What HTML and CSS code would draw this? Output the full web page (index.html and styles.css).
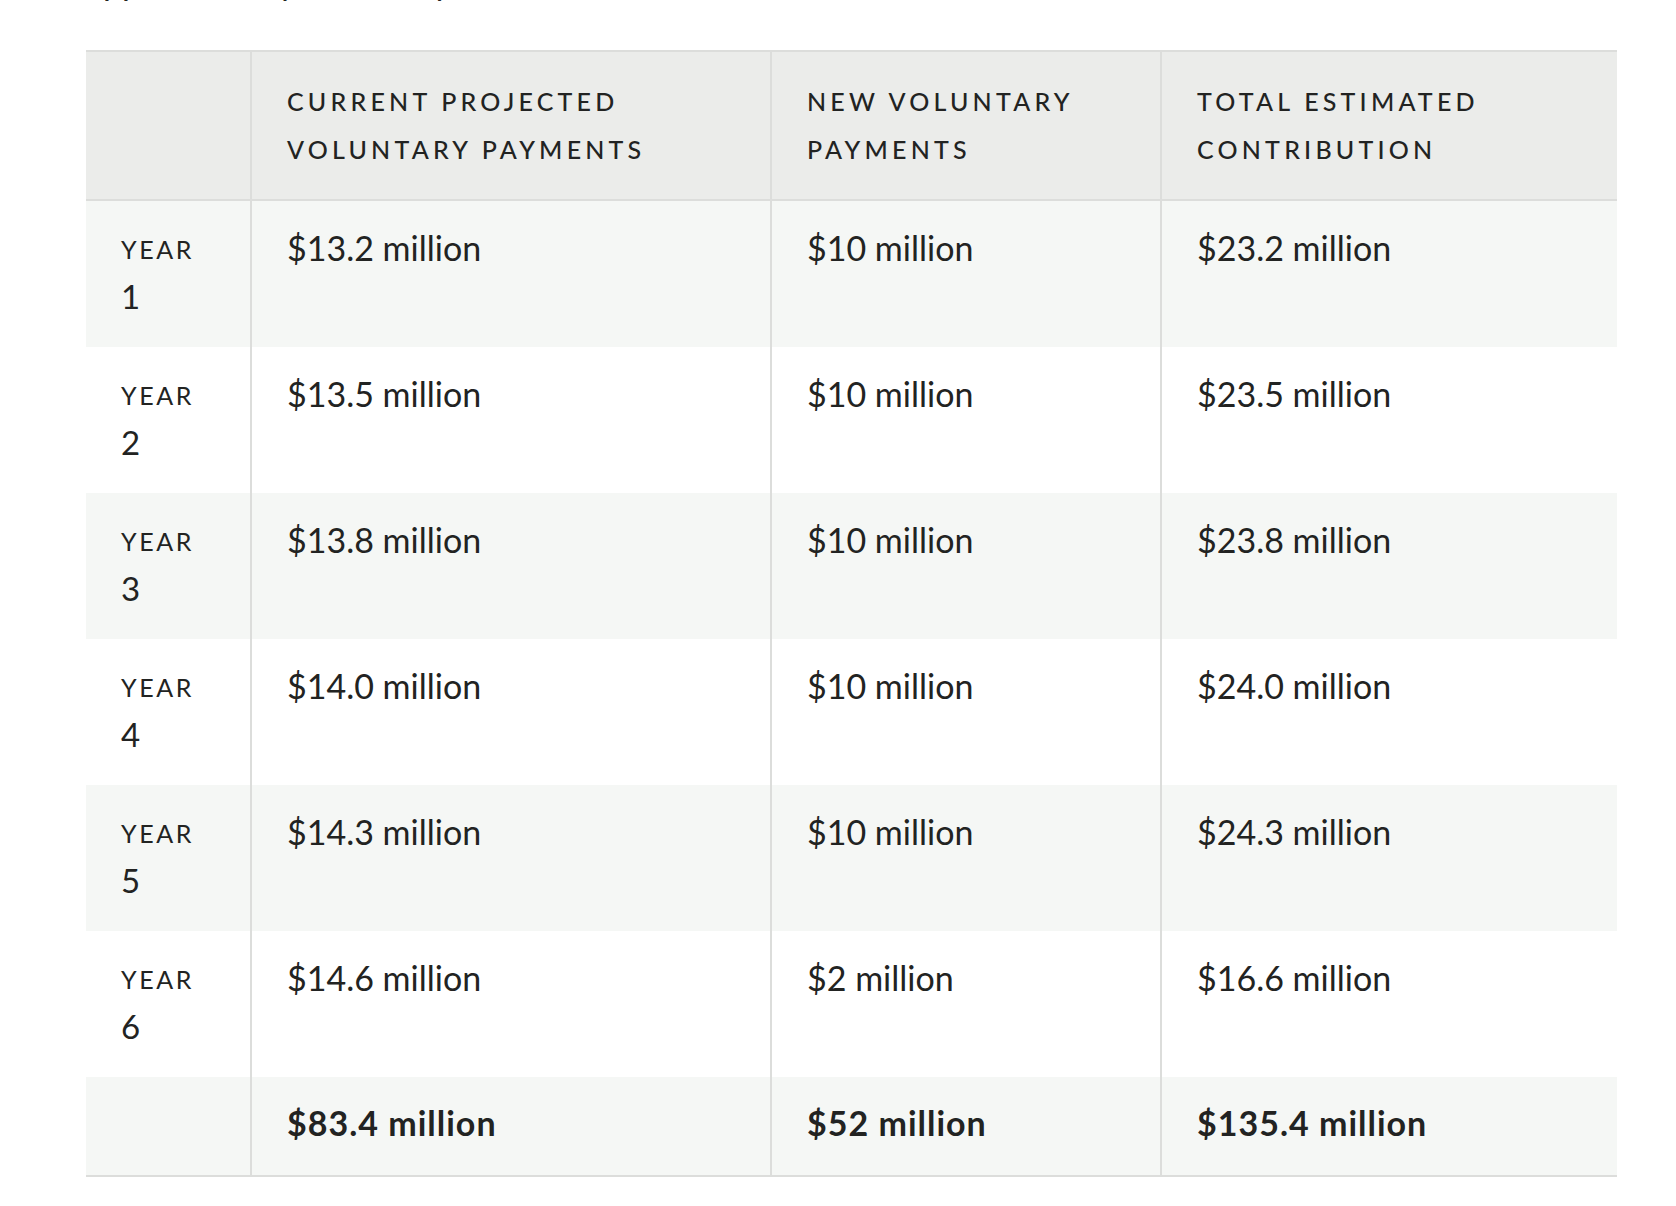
FILE: index.html
```html
<!DOCTYPE html>
<html lang="en">
<head>
<meta charset="utf-8">
<title>Voluntary payments</title>
<link rel="stylesheet" href="styles.css">
</head>
<body>
<main class="page">
  <p class="lead">approximately, over six years.</p>
  <table class="pay-table">
    <colgroup>
      <col class="c-year">
      <col class="c-current">
      <col class="c-new">
      <col class="c-total">
    </colgroup>
    <thead>
      <tr>
        <th></th>
        <th>Current projected<br>voluntary payments</th>
        <th>New voluntary<br>payments</th>
        <th>Total estimated<br>contribution</th>
      </tr>
    </thead>
    <tbody>
      <tr><th class="year"><span class="lbl">Year</span><br>1</th><td>$13.2 million</td><td>$10 million</td><td>$23.2 million</td></tr>
      <tr><th class="year"><span class="lbl">Year</span><br>2</th><td>$13.5 million</td><td>$10 million</td><td>$23.5 million</td></tr>
      <tr><th class="year"><span class="lbl">Year</span><br>3</th><td>$13.8 million</td><td>$10 million</td><td>$23.8 million</td></tr>
      <tr><th class="year"><span class="lbl">Year</span><br>4</th><td>$14.0 million</td><td>$10 million</td><td>$24.0 million</td></tr>
      <tr><th class="year"><span class="lbl">Year</span><br>5</th><td>$14.3 million</td><td>$10 million</td><td>$24.3 million</td></tr>
      <tr><th class="year"><span class="lbl">Year</span><br>6</th><td>$14.6 million</td><td>$2 million</td><td>$16.6 million</td></tr>
      <tr class="total"><th class="year"></th><td>$83.4 million</td><td>$52 million</td><td>$135.4 million</td></tr>
    </tbody>
  </table>
</main>
</body>
</html>
```

FILE: styles.css
```css
html, body {
  margin: 0;
  padding: 0;
  background: #ffffff;
}

body {
  font-family: Lato, "Open Sans", "Liberation Sans", sans-serif;
  color: #222322;
}

.page {
  padding: 0 59px 0 86px;
}

.lead {
  margin: -42px 0 44px 0;
  font-size: 34px;
  line-height: 48px;
}

.pay-table {
  border-collapse: collapse;
  width: 1531px;
  table-layout: fixed;
  border-top: 2px solid #dcdddb;
  border-bottom: 2px solid #dcdddb;
}

.c-year { width: 165px; }
.c-current { width: 520px; }
.c-new { width: 390px; }
.c-total { width: 456px; }

.pay-table th,
.pay-table td {
  text-align: left;
  vertical-align: baseline;
  padding: 23px 20px 27px 35px;
  border-left: 2px solid #dcdddb;
  line-height: 48px;
}

.pay-table tr > :first-child {
  border-left: none;
}

.pay-table thead th {
  background: #ebecea;
  font-weight: 500;
  font-size: 25px;
  letter-spacing: 4.2px;
  text-transform: uppercase;
  padding-top: 25px;
  padding-bottom: 26px;
  border-bottom: 2px solid #dcdddb;
}

.pay-table td {
  font-size: 34px;
  font-weight: 400;
}

.pay-table th.year {
  font-size: 33px;
  font-weight: 400;
}

.pay-table th.year .lbl {
  font-size: 25px;
  line-height: 1;
  vertical-align: 2px;
  letter-spacing: 2.6px;
  text-transform: uppercase;
}

.pay-table tbody tr:nth-child(odd) {
  background: #f5f7f5;
}

.pay-table tbody tr:nth-child(even) {
  background: #ffffff;
}

.pay-table tr.total td {
  font-weight: 700;
  letter-spacing: 1px;
  padding-top: 22px;
  padding-bottom: 28px;
}

.pay-table tr.total th,
.pay-table tr.total td {
  height: 48px;
}
```
